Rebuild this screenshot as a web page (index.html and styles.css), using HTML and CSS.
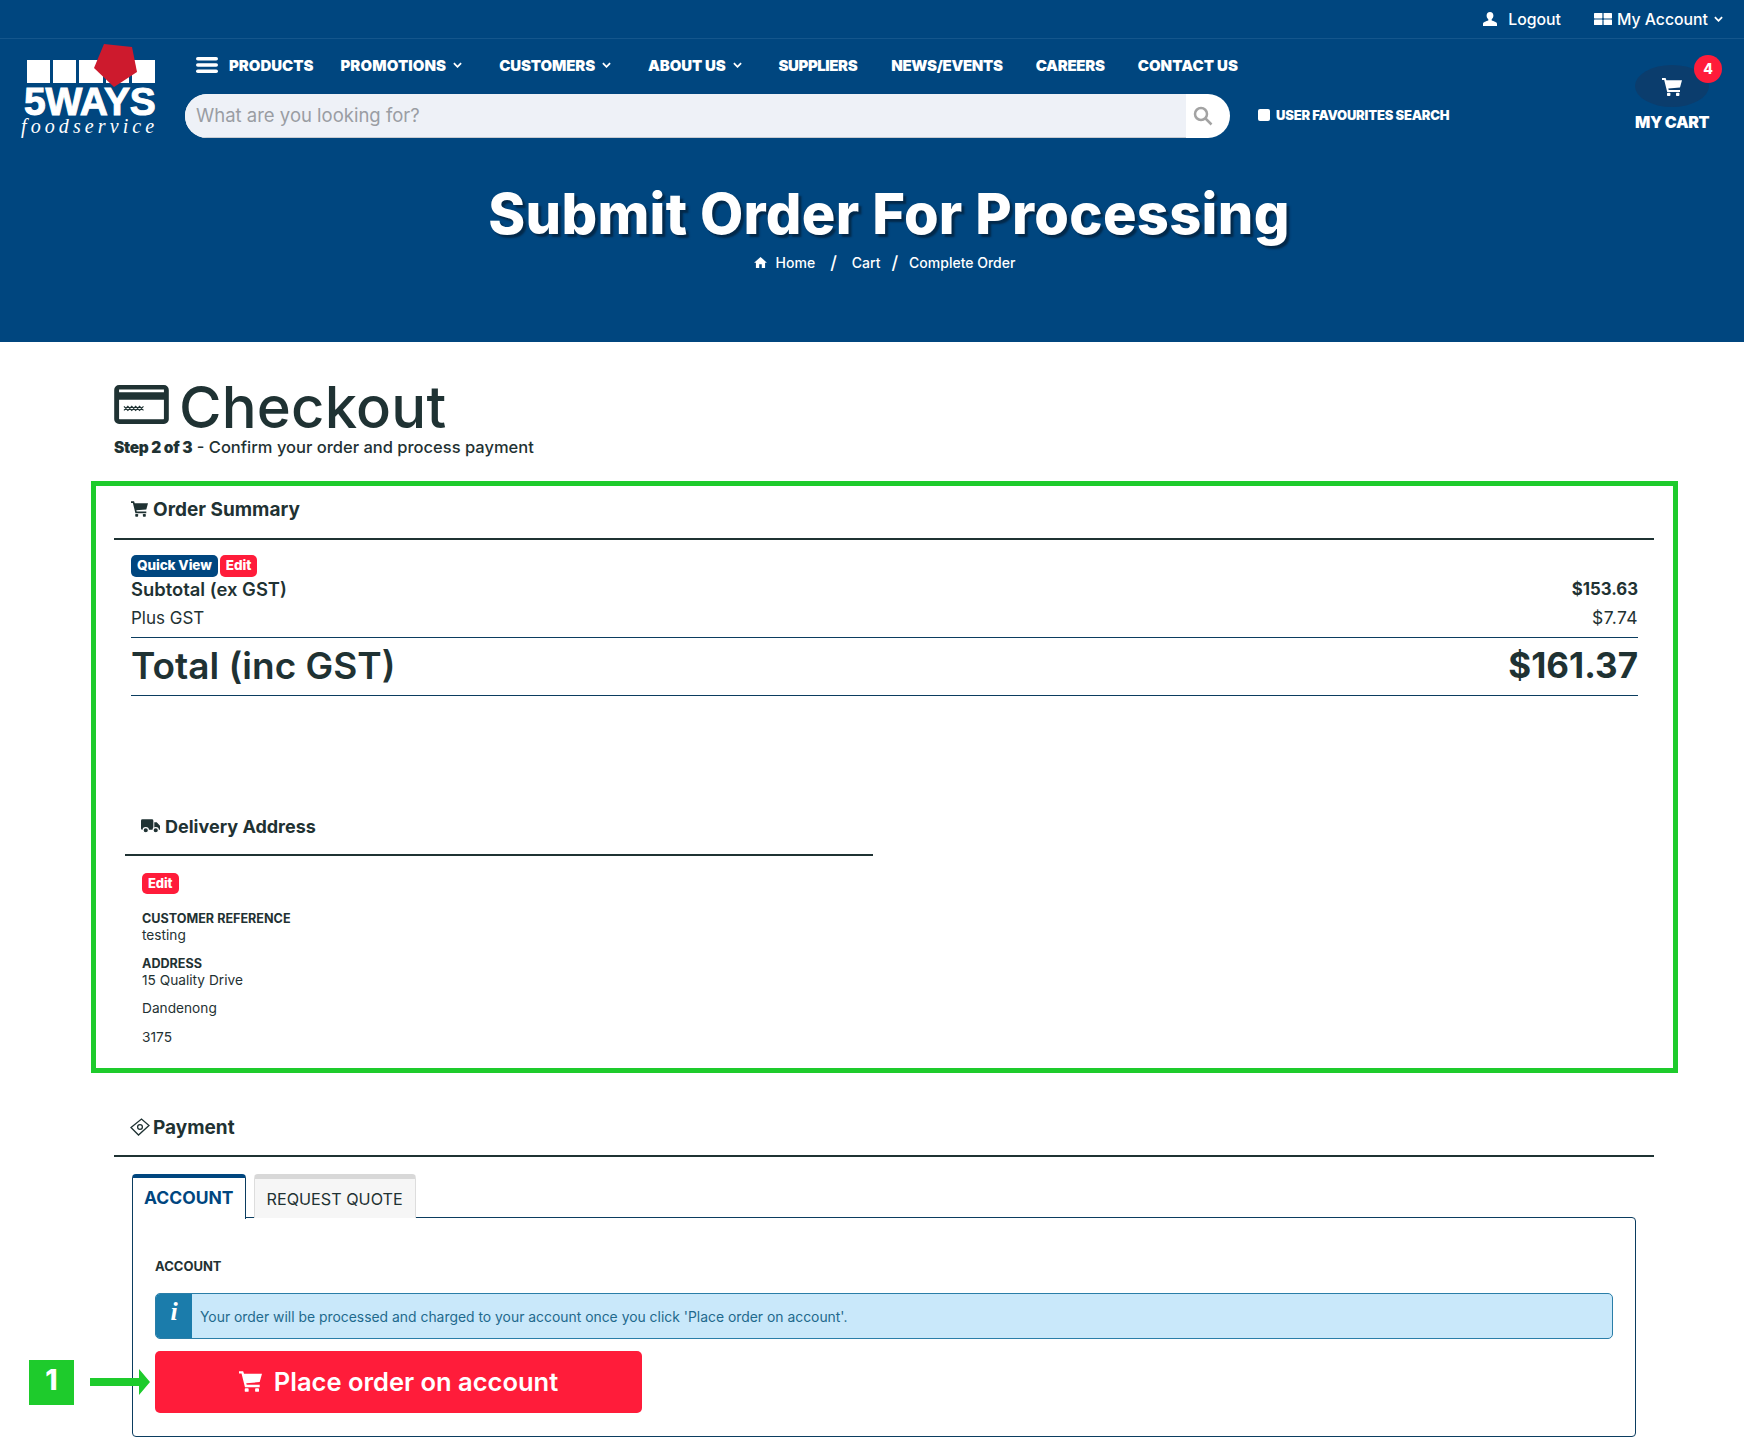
FILE: index.html
```html
<!DOCTYPE html>
<html lang="en">
<head>
<meta charset="utf-8">
<title>Submit Order For Processing</title>
<link rel="stylesheet" href="styles.css">
</head>
<body>
<svg class="defs" width="0" height="0" aria-hidden="true">
  <symbol id="cart" viewBox="0 0 20 18"><path d="M0 0h3.600l.8 2.200H20l-2 7.300-11.700 1 .4 1.400H18v2H5.200L2.200 2H0z"/><rect x="5" y="14.800" width="3.400" height="3.200" rx=".8"/><rect x="14" y="14.800" width="3.400" height="3.200" rx=".8"/></symbol>
</svg>
<header class="site-header">
  <div class="topbar">
    <a class="top-link logout"><svg class="ico-user" viewBox="0 0 16 14"><path d="M8 0c2.200 0 3.400 1.500 3.400 3.600 0 1.600-.8 3-1.700 3.700v1.200c2 .7 5.300 1.600 5.300 3.200V14H1v-2.300c0-1.600 3.300-2.500 5.300-3.200V7.300C5.400 6.600 4.600 5.200 4.600 3.600 4.600 1.500 5.800 0 8 0z"/></svg>Logout</a>
    <a class="top-link account"><svg class="ico-grid" viewBox="0 0 18 12"><rect width="8.400" height="5.400" rx=".6"/><rect x="9.600" width="8.400" height="5.400" rx=".6"/><rect y="6.600" width="8.400" height="5.400" rx=".6"/><rect x="9.600" y="6.600" width="8.400" height="5.400" rx=".6"/></svg>My Account<svg class="caret" viewBox="0 0 10 6"><path d="M1 1l4 4 4-4"/></svg></a>
  </div>
  <div class="masthead">
    <a class="logo">
      <div class="logo-blocks"><i></i><i></i><i></i><i></i><i></i></div>
      <svg class="logo-gem" viewBox="0 0 44 43"><path d="M10 0l28 3 5 25-23 15L0 24z"/></svg>
      <div class="logo-name">5WAYS</div>
      <div class="logo-sub">foodservice</div>
    </a>
    <div class="nav-col">
      <nav class="nav">
        <svg class="ico-burger" viewBox="0 0 22 16"><rect width="22" height="3.600" rx="1.800"/><rect y="6.200" width="22" height="3.600" rx="1.800"/><rect y="12.400" width="22" height="3.600" rx="1.800"/></svg>
        <a class="nav-item n-products">PRODUCTS</a>
        <a class="nav-item n-promotions">PROMOTIONS<svg class="caret" viewBox="0 0 10 6"><path d="M1 1l4 4 4-4"/></svg></a>
        <a class="nav-item n-customers">CUSTOMERS<svg class="caret" viewBox="0 0 10 6"><path d="M1 1l4 4 4-4"/></svg></a>
        <a class="nav-item n-about">ABOUT US<svg class="caret" viewBox="0 0 10 6"><path d="M1 1l4 4 4-4"/></svg></a>
        <a class="nav-item n-suppliers">SUPPLIERS</a>
        <a class="nav-item n-news">NEWS/EVENTS</a>
        <a class="nav-item n-careers">CAREERS</a>
        <a class="nav-item n-contact">CONTACT US</a>
      </nav>
      <div class="search-row">
        <div class="search">
          <div class="search-input">What are you looking for?</div>
          <div class="search-btn"><svg viewBox="0 0 20 20"><circle cx="8" cy="8" r="6"/><path d="M12.500 12.500L18.500 18.500"/></svg></div>
        </div>
        <label class="fav"><span class="fav-box"></span>USER FAVOURITES SEARCH</label>
      </div>
    </div>
    <a class="mini-cart">
      <span class="cart-bubble"><svg class="ico-cart-w"><use href="#cart"/></svg></span>
      <span class="cart-count">4</span>
      <span class="cart-label">MY CART</span>
    </a>
  </div>
  <div class="page-title">
    <h1>Submit Order For Processing</h1>
    <div class="crumbs">
      <svg class="ico-home" viewBox="0 0 14 12"><path d="M7 0l7 6.200h-2V12H8.400V8H5.600v4H2V6.200H0z"/></svg>
      <a class="c-home">Home</a><span class="sep">/</span><a class="c-cart">Cart</a><span class="sep sep2">/</span><a>Complete Order</a>
    </div>
  </div>
</header>

<main class="content">
  <div class="checkout-head">
    <svg class="ico-card" viewBox="0 0 56 40"><path fill-rule="evenodd" d="M5 0h46a5 5 0 0 1 5 5v30a5 5 0 0 1-5 5H5a5 5 0 0 1-5-5V5a5 5 0 0 1 5-5zM5 4.500v3h46v-3zM5 15v19.500a.5.5 0 0 0 .5.5h45a.5.5 0 0 0 .5-.5V15z"/><path class="card-x" d="M10 22l4 4 4-4 4 4 4-4 4 4M10 26l4-4 4 4 4-4 4 4 4-4"/></svg>
    <h2>Checkout</h2>
  </div>
  <p class="step"><b>Step 2 of 3</b> - Confirm your order and process payment</p>

  <section class="frame">
    <h3 class="sec-title"><svg class="ico-cart"><use href="#cart"/></svg>Order Summary</h3>
    <div class="summary">
      <div class="btn-row"><a class="tag tag-blue">Quick View</a><a class="tag tag-red">Edit</a></div>
      <div class="row row-sub"><span>Subtotal (ex GST)</span><span>$153.63</span></div>
      <div class="row row-gst"><span>Plus GST</span><span>$7.74</span></div>
      <div class="row row-total"><span>Total (inc GST)</span><span>$161.37</span></div>
    </div>
    <div class="delivery">
      <h3 class="sec-title"><svg class="ico-truck" viewBox="0 0 20 16"><path d="M1.500 1h10A1.500 1.500 0 0 1 13 2.500V12H1.500A1.500 1.500 0 0 1 0 10.500v-8A1.500 1.500 0 0 1 1.500 1zM14 4h2.500L20 7.800V12h-6z"/><circle class="wheel" cx="5" cy="12.500" r="2.800"/><circle class="wheel" cx="15.500" cy="12.500" r="2.800"/></svg>Delivery Address</h3>
      <div class="delivery-body">
        <a class="tag tag-red">Edit</a>
        <dl class="details">
          <dt>CUSTOMER REFERENCE</dt>
          <dd>testing</dd>
          <dt>ADDRESS</dt>
          <dd>15 Quality Drive</dd>
          <dd class="spaced">Dandenong</dd>
          <dd class="spaced">3175</dd>
        </dl>
      </div>
    </div>
  </section>

  <section class="payment">
    <h3 class="sec-title"><svg class="ico-money" viewBox="0 0 20 18"><path d="M1 9.500L11.500 1l7.500 6.500L8.500 17z"/><circle cx="10" cy="9" r="2.400"/></svg>Payment</h3>
    <div class="tabs">
      <a class="tab tab-active">ACCOUNT</a>
      <a class="tab">REQUEST QUOTE</a>
    </div>
    <div class="tab-panel">
      <div class="panel-label">ACCOUNT</div>
      <div class="info">
        <span class="info-icon">i</span>
        <span class="info-text">Your order will be processed and charged to your account once you click 'Place order on account'.</span>
      </div>
      <a class="place-btn"><svg class="ico-cart-btn"><use href="#cart"/></svg>Place order on account</a>
      <span class="marker">1</span>
      <svg class="arrow" viewBox="0 0 60 26"><path d="M0 9h49V0l11 13-11 13v-9H0z"/></svg>
    </div>
  </section>
</main>
</body>
</html>
```
FILE: styles.css
```css
* { box-sizing: border-box; }
html, body { margin: 0; padding: 0; }
body {
  width: 1744px;
  height: 1456px;
  overflow: hidden;
  background: #fff;
  color: #1f3233;
  font-family: Inter, "Open Sans", "Liberation Sans", sans-serif;
}
.defs { position: absolute; }
a { color: inherit; text-decoration: none; }
h1, h2, h3, p, dl, dd { margin: 0; }

/* header */
.site-header { height: 342px; background: #00467f; color: #fff; }
.topbar {
  height: 39px;
  border-bottom: 1px solid #14568c;
  display: flex;
  justify-content: flex-end;
  align-items: center;
  padding-right: 21px;
  font-size: 15.800px;
  font-weight: 500;
}
.top-link { display: flex; align-items: center; }
.logout { margin-right: 33px; }
.ico-user { width: 16px; height: 14px; fill: #fff; margin-right: 10px; }
.ico-grid { width: 18px; height: 12px; fill: #fff; margin-right: 5px; }
.caret { width: 9px; height: 6px; margin-left: 7px; fill: none; stroke: #fff; stroke-width: 2; }
.top-link .caret { margin-left: 6px; }

.masthead { display: flex; height: 108px; position: relative; }
.logo { display: block; position: relative; width: 176px; padding: 21px 0 0 27px; flex: none; }
.logo-blocks { display: flex; gap: 3px; height: 23px; width: 128px; }
.logo-blocks i { flex: 1; background: #fff; }
.logo-gem { position: absolute; left: 94px; top: 5px; width: 44px; height: 43px; fill: #cd1a2d; }
.logo-name {
  font-family: "Liberation Sans", Arial, sans-serif;
  font-weight: 700;
  font-size: 39px;
  line-height: 28px;
  margin: 5px 0 0 -3px;
  -webkit-text-stroke: 1px #fff;
  letter-spacing: -.3px;
}
.logo-sub {
  font-family: "Liberation Serif", serif;
  font-style: italic;
  font-size: 20px;
  line-height: 16px;
  letter-spacing: 4.100px;
  margin: 2px 0 0 -6px;
  white-space: nowrap;
}

.nav-col { width: 1430px; flex: none; padding-left: 9px; }
.nav { display: flex; align-items: center; height: 52px; padding-left: 11px; font-size: 15px; font-weight: 900; letter-spacing: -.33px; }
.ico-burger { width: 22px; height: 16px; fill: #fff; margin-right: 11px; }
.nav-item { display: flex; align-items: center; white-space: nowrap; }
.n-products { margin-right: 27px; letter-spacing: -.03px; }
.n-promotions { margin-right: 37px; letter-spacing: .1px; }
.n-customers { margin-right: 37px; letter-spacing: -.13px; }
.n-about { margin-right: 37px; letter-spacing: -.13px; }
.n-suppliers { margin-right: 34px; letter-spacing: -.43px; }
.n-news { margin-right: 33px; }
.n-careers { margin-right: 33px; letter-spacing: -.3px; }
.n-contact { letter-spacing: .05px; }

.search-row { display: flex; align-items: center; height: 44px; margin-top: 3px; }
.search {
  width: 1045px; height: 44px; border-radius: 22px; background: #fff; display: flex; overflow: hidden; flex: none;
}
.search-input {
  flex: 1; background: #eef1f7; border-bottom: 1px solid #c8ccd2;
  color: #9a9da3; font-size: 18.500px; line-height: 43px; padding-left: 11px;
}
.search-btn { width: 44px; display: flex; align-items: center; padding-left: 7px; }
.search-btn svg { width: 20px; height: 20px; fill: none; stroke: #a3a3a3; stroke-width: 2.500; }
.fav { display: flex; align-items: center; margin-left: 28px; margin-top: -2px; font-size: 13px; font-weight: 900; letter-spacing: -.2px; }
.fav-box { width: 12px; height: 12px; border-radius: 2px; background: #fff; margin-right: 6px; }

.mini-cart { position: relative; display: block; width: 74px; padding-top: 26px; text-align: center; flex: none; margin-left: 29px; }
.cart-bubble { display: flex; align-items: center; justify-content: center; width: 74px; height: 42px; border-radius: 50%; background: #0b3d6d; padding-top: 2px; }
.ico-cart-w { width: 20px; height: 18px; fill: #fff; }
.cart-count {
  position: absolute; left: 59px; top: 16px; width: 28px; height: 28px; border-radius: 50%;
  background: #ff1c3a; font-size: 14px; font-weight: 800; line-height: 28px; text-align: center;
}
.cart-label { display: block; margin-top: 5px; font-size: 16px; font-weight: 900; letter-spacing: -.35px; white-space: nowrap; }

.page-title { padding-left: 34px; text-align: center; }
h1 { font-size: 56px; line-height: 64px; font-weight: 800; letter-spacing: .3px; text-shadow: 3px 3px 2px #03294a; margin-top: 35px; }
.crumbs { display: flex; justify-content: center; align-items: center; height: 24px; margin-top: 4px; padding-right: 9px; font-size: 14px; font-weight: 500; }
.ico-home { width: 13px; height: 11px; fill: #fff; margin-right: 9px; }
.sep { margin: 0 15px; font-size: 18px; }
.sep2 { margin: 0 11px; }

/* main */
.content { padding: 0 90px 0 114px; }
.checkout-head { display: flex; align-items: center; height: 55px; margin-top: 37.500px; }
.ico-card { width: 55px; height: 39px; fill: #1f3233; margin-right: 10px; margin-top: -6px; }
.card-x { fill: none; stroke: #1f3233; stroke-width: 1.200; }
h2 { font-size: 58px; font-weight: 500; line-height: 55px; letter-spacing: .2px; }
.step { font-size: 16.500px; font-weight: 500; line-height: 24px; }
.step b { font-weight: 900; font-size: 15.500px; letter-spacing: -.3px; }

.frame {
  margin: 21px -24px 0 -23px;
  height: 592px;
  border: 5px solid #1ecb2c;
  padding: 0 19px 0 18px;
}
.sec-title {
  display: flex; align-items: center; height: 53px;
  padding: 0 0 4px 17px; border-bottom: 2px solid #1f3233;
  font-size: 19px; font-weight: 700;
}
.frame > .sec-title { height: 54px; padding-bottom: 5px; }
.ico-cart { width: 17px; height: 16px; fill: #1f3233; margin-right: 5px; }
.summary { padding: 15px 16px 0 17px; }
.btn-row { display: flex; gap: 2px; height: 24px; }
.tag { display: inline-block; height: 22px; line-height: 21px; padding: 0 6px; border-radius: 5px; color: #fff; font-size: 13.500px; font-weight: 800; letter-spacing: -.1px; }
.tag-blue { background: #00467f; }
.tag-red { background: #ff1c3a; }
.row { display: flex; justify-content: space-between; align-items: center; }
.row-sub { height: 21px; font-size: 18.400px; font-weight: 600; }
.row-sub span:last-child { font-size: 16.800px; font-weight: 700; }
.row-gst { height: 38px; padding-bottom: 1px; font-size: 17px; font-weight: 400; border-bottom: 1px solid #0b3d60; }
.row-gst span:last-child { font-size: 17.500px; letter-spacing: .4px; }
.row-total { height: 58px; padding-bottom: 2px; font-size: 37px; font-weight: 600; border-bottom: 1px solid #0b3d60; }
.row-total span:last-child { font-weight: 700; font-size: 35px; }

.delivery { width: 748px; margin: 107px 0 0 11px; }
.delivery .sec-title { padding-left: 16px; font-size: 18px; }
.ico-truck { width: 19px; height: 16px; fill: #1f3233; margin-right: 5px; }
.wheel { stroke: #fff; stroke-width: 1.200; fill: #1f3233; }
.delivery-body { padding: 17px 17px 0; }
.delivery-body .tag { display: block; width: 37px; height: 21px; line-height: 20px; font-size: 13px; padding: 0 6px; }
.details { margin-top: 16px; font-size: 13.700px; line-height: 17px; }
.details dt { font-weight: 700; font-size: 12.600px; }
.details dd { margin-bottom: 11px; }
.details dd.spaced { margin-bottom: 12px; }

.payment { margin-top: 31px; }
.ico-money { width: 20px; height: 18px; fill: #fff; stroke: #1f3233; stroke-width: 1.300; margin-right: 3px; margin-left: -1px; }
.tabs { display: flex; gap: 8px; margin: 17px 0 0 18px; height: 44px; position: relative; z-index: 1; }
.tab {
  height: 44px; padding: 0 12px; line-height: 40px; font-size: 16.200px; font-weight: 400;
  border: 1px solid #ddd; border-top: 5px solid #d8d8d8; border-bottom: 0; border-radius: 4px 4px 0 0; background: #f6f6f6;
}
.tab-active {
  padding: 0 11px; background: #fff; color: #00467f; font-size: 17.500px; font-weight: 700; border: 1px solid #0b3d60; border-top: 4px solid #00467f; border-bottom: 0; height: 45px;
}
.tab-panel {
  position: relative;
  margin-left: 18px;
  width: 1504px;
  height: 220px;
  margin-top: -1px;
  border: 1px solid #0b3d60;
  border-radius: 0 4px 4px 4px;
  padding: 36px 22px 0;
}
.panel-label { font-size: 13px; font-weight: 700; line-height: 24px; }
.info {
  display: flex; height: 46px; margin-top: 15px;
  background: #c9e8fa; border: 1px solid #2a7ea8; border-radius: 5px; overflow: hidden;
}
.info-icon {
  width: 36px; background: #1b7cab; color: #fff; text-align: center; flex: none;
  font-family: "Liberation Serif", serif; font-style: italic; font-weight: 700; font-size: 26px; line-height: 36px;
}
.info-text { padding-left: 8px; font-size: 13.900px; line-height: 46px; color: #1f6a8d; }
.place-btn {
  display: flex; align-items: center; justify-content: center;
  width: 487px; height: 62px; margin-top: 12px; border-radius: 5px;
  background: #ff1c3a; color: #fff; font-size: 25.500px; font-weight: 600;
}
.ico-cart-btn { width: 23px; height: 21px; fill: #fff; margin-right: 12px; }
.marker {
  position: absolute; left: -104px; top: 142px; width: 45px; height: 45px;
  background: #1ecb2c; color: #fff; font-size: 28px; font-weight: 800; line-height: 40px; text-align: center;
}
.arrow { position: absolute; left: -43px; top: 151px; width: 60px; height: 26px; fill: #1ecb2c; }
```
